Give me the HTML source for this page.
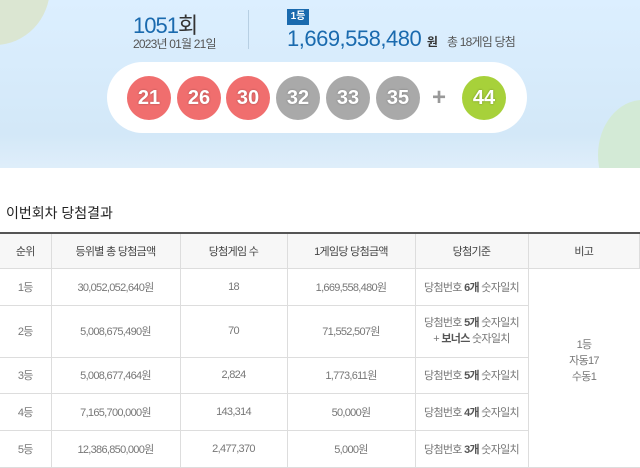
<!DOCTYPE html>
<html><head><meta charset="utf-8"><style>
*{margin:0;padding:0;box-sizing:border-box}
body{width:640px;height:463px;overflow:hidden;background:#fff;font-family:"Liberation Sans","Noto Sans CJK KR",sans-serif;position:relative}
.top{position:absolute;left:0;top:0;width:640px;height:168px;background:linear-gradient(#dcefff,#d3e8f8 80%,#dfeefa);overflow:hidden}
.c1{position:absolute;left:-60px;top:-70px;width:110px;height:115px;border-radius:50%;background:#dbe6d2}
.c2{position:absolute;left:598px;top:100px;width:90px;height:110px;border-radius:50%;background:#d3ead6}
.a{position:absolute;white-space:nowrap}
.blue{color:#1a6aae}
.pill{position:absolute;left:107px;top:62px;width:420px;height:71px;border-radius:36px;background:#fff}
.ball{position:absolute;top:76px;width:44px;height:44px;border-radius:50%;color:#fff;font-size:20px;font-weight:bold;text-align:center;line-height:44px;text-shadow:0 0 2px rgba(0,0,0,.3)}
.r{background:#f06e6e}.g{background:#a9a9a9}.y{background:#a7d13a}
table{position:absolute;left:0;top:232px;width:640px;border-collapse:collapse;border-top:2px solid #555;font-size:11px;color:#777;letter-spacing:-0.7px}
td,th{border:1px solid #ddd;text-align:center;font-weight:normal;padding:0}
th{background:#f7f7f7;height:35px;color:#444}
td:first-child,th:first-child{border-left:none}
td b{color:#555}
</style></head><body>
<div class="top"><div class="c1"></div><div class="c2"></div>
<div class="a blue" style="left:133px;top:8px;font-size:22px;letter-spacing:-1px">1051<span style="color:#333">회</span></div>
<div class="a" style="left:133px;top:35px;font-size:12px;color:#555;letter-spacing:-0.8px">2023년 01월 21일</div>
<div style="position:absolute;left:248px;top:10px;width:1px;height:39px;background:#b7cfe3"></div>
<div class="a" style="left:287px;top:9px;width:22px;height:16px;background:#1a6aae;color:#fff;font-size:10px;font-weight:bold;text-align:center;line-height:16px">1등</div>
<div class="a blue" style="left:287px;top:26px;font-size:22px;letter-spacing:-0.5px">1,669,558,480 <span style="font-size:12px;font-weight:bold;color:#333">원</span> <span style="font-size:12px;color:#555;margin-left:4px;letter-spacing:-0.8px">총 18게임 당첨</span></div>
<div class="pill"></div>
<div class="ball r" style="left:127px">21</div>
<div class="ball r" style="left:177px">26</div>
<div class="ball r" style="left:226px">30</div>
<div class="ball g" style="left:276px">32</div>
<div class="ball g" style="left:326px">33</div>
<div class="ball g" style="left:376px">35</div>
<div class="a" style="left:432px;top:84px;font-size:24px;color:#999;font-weight:bold">+</div>
<div class="ball y" style="left:462px">44</div>
</div>
<div class="a" style="left:6px;top:203px;font-size:14px;color:#222">이번회차 당첨결과</div>
<table>
<tr><th style="width:51px">순위</th><th style="width:129px">등위별 총 당첨금액</th><th style="width:107px">당첨게임 수</th><th style="width:128px">1게임당 당첨금액</th><th style="width:113px">당첨기준</th><th>비고</th></tr>
<tr style="height:37px"><td>1등</td><td>30,052,052,640원</td><td>18</td><td>1,669,558,480원</td><td>당첨번호 <b>6개</b> 숫자일치</td><td rowspan="5" style="line-height:16px;border-right:none;padding-bottom:14px">1등<br>자동17<br>수동1</td></tr>
<tr style="height:52px"><td>2등</td><td>5,008,675,490원</td><td>70</td><td>71,552,507원</td><td style="line-height:16px">당첨번호 <b>5개</b> 숫자일치<br>+ <b>보너스</b> 숫자일치</td></tr>
<tr style="height:36px"><td>3등</td><td>5,008,677,464원</td><td>2,824</td><td>1,773,611원</td><td>당첨번호 <b>5개</b> 숫자일치</td></tr>
<tr style="height:37px"><td>4등</td><td>7,165,700,000원</td><td>143,314</td><td>50,000원</td><td>당첨번호 <b>4개</b> 숫자일치</td></tr>
<tr style="height:37px"><td>5등</td><td>12,386,850,000원</td><td>2,477,370</td><td>5,000원</td><td>당첨번호 <b>3개</b> 숫자일치</td></tr>
</table>
</body></html>
